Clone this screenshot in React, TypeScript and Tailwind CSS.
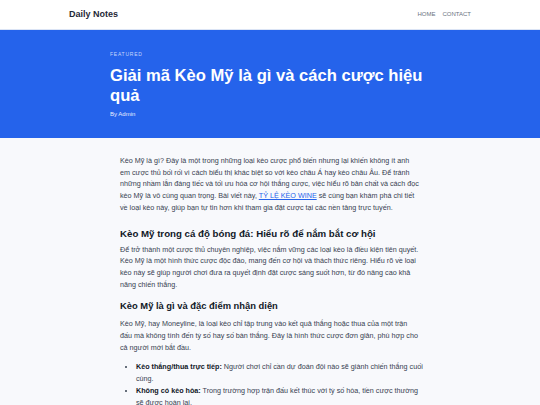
import React from 'react';

const font = { fontFamily: '"Liberation Sans", Arial, sans-serif' };

function Header() {
  return (
    <header className="bg-white border-b border-[#dbe4f5]">
      <div className="mx-auto flex h-[29px] w-[402px] items-center justify-between">
        <a className="text-[9px] font-bold text-[#1f2937]">Daily Notes</a>
        <nav className="flex gap-[7px] text-[6px] uppercase text-[#6b7280]">
          <a>Home</a>
          <a>Contact</a>
        </nav>
      </div>
    </header>
  );
}

function Hero() {
  return (
    <section className="bg-[#2563eb] h-[108px]">
      <div className="mx-auto w-[320px] pt-[21px]">
        <p className="text-[5px] leading-[7.5px] tracking-[0.15em] uppercase text-[#c7d7fb]">Featured</p>
        <h1 className="mt-[7px] mr-[-12px] text-[16.6px] font-bold leading-[20px] text-white">
          Giải mã Kèo Mỹ là gì và cách cược hiệu quả
        </h1>
        <p className="mt-[4px] text-[6px] leading-[9px] text-[#e5edff]">By Admin</p>
      </div>
    </section>
  );
}

export default function App() {
  return (
    <div style={font} className="min-h-[405px] bg-[#f8f9fc]">
      <Header />
      <Hero />

      {/* Bài viết */}
      <main className="mx-auto w-[300px] pt-[17px] text-[7.2px] leading-[11.7px] text-[#374151]">
        <p>
          Kèo Mỹ là gì? Đây là một trong những loại kèo cược phổ biến nhưng lại khiến không ít anh
          em cược thủ bối rối vì cách biểu thị khác biệt so với kèo châu Á hay kèo châu Âu. Để tránh
          những nhầm lẫn đáng tiếc và tối ưu hóa cơ hội thắng cược, việc hiểu rõ bản chất và cách đọc
          kèo Mỹ là vô cùng quan trọng. Bài viết này,{' '}
          <a className="text-[#2563eb] underline">TỶ LỆ KÈO WINE</a> sẽ cùng bạn khám phá chi tiết
          về loại kèo này, giúp bạn tự tin hơn khi tham gia đặt cược tại các nền tảng trực tuyến.
        </p>

        <h2 className="mt-[13px] text-[9.7px] font-bold leading-[14px] text-[#111827]">
          Kèo Mỹ trong cá độ bóng đá: Hiểu rõ để nắm bắt cơ hội
        </h2>
        <p className="mt-[3px]">
          Để trở thành một cược thủ chuyên nghiệp, việc nắm vững các loại kèo là điều kiện tiên quyết.
          Kèo Mỹ là một hình thức cược độc đáo, mang đến cơ hội và thách thức riêng. Hiểu rõ về loại
          kèo này sẽ giúp người chơi đưa ra quyết định đặt cược sáng suốt hơn, từ đó nâng cao khả
          năng chiến thắng.
        </p>

        <h3 className="mt-[10px] text-[9.4px] font-bold leading-[12px] text-[#111827]">
          Kèo Mỹ là gì và đặc điểm nhận diện
        </h3>
        <p className="mt-[6px]">
          Kèo Mỹ, hay Moneyline, là loại kèo chỉ tập trung vào kết quả thắng hoặc thua của một trận
          đấu mà không tính đến tỷ số hay số bàn thắng. Đây là hình thức cược đơn giản, phù hợp cho
          cả người mới bắt đầu.
        </p>

        <ul className="mt-[8px] mr-[-4px] list-disc pl-[16px]">
          <li>
            <strong className="text-[#111827]">Kèo thắng/thua trực tiếp:</strong> Người chơi chỉ cần dự
            đoán đội nào sẽ giành chiến thắng cuối cùng.
          </li>
          <li>
            <strong className="text-[#111827]">Không có kèo hòa:</strong> Trong trường hợp trận đấu kết
            thúc với tỷ số hòa, tiền cược thường sẽ được hoàn lại.
          </li>
        </ul>
      </main>
    </div>
  );
}
